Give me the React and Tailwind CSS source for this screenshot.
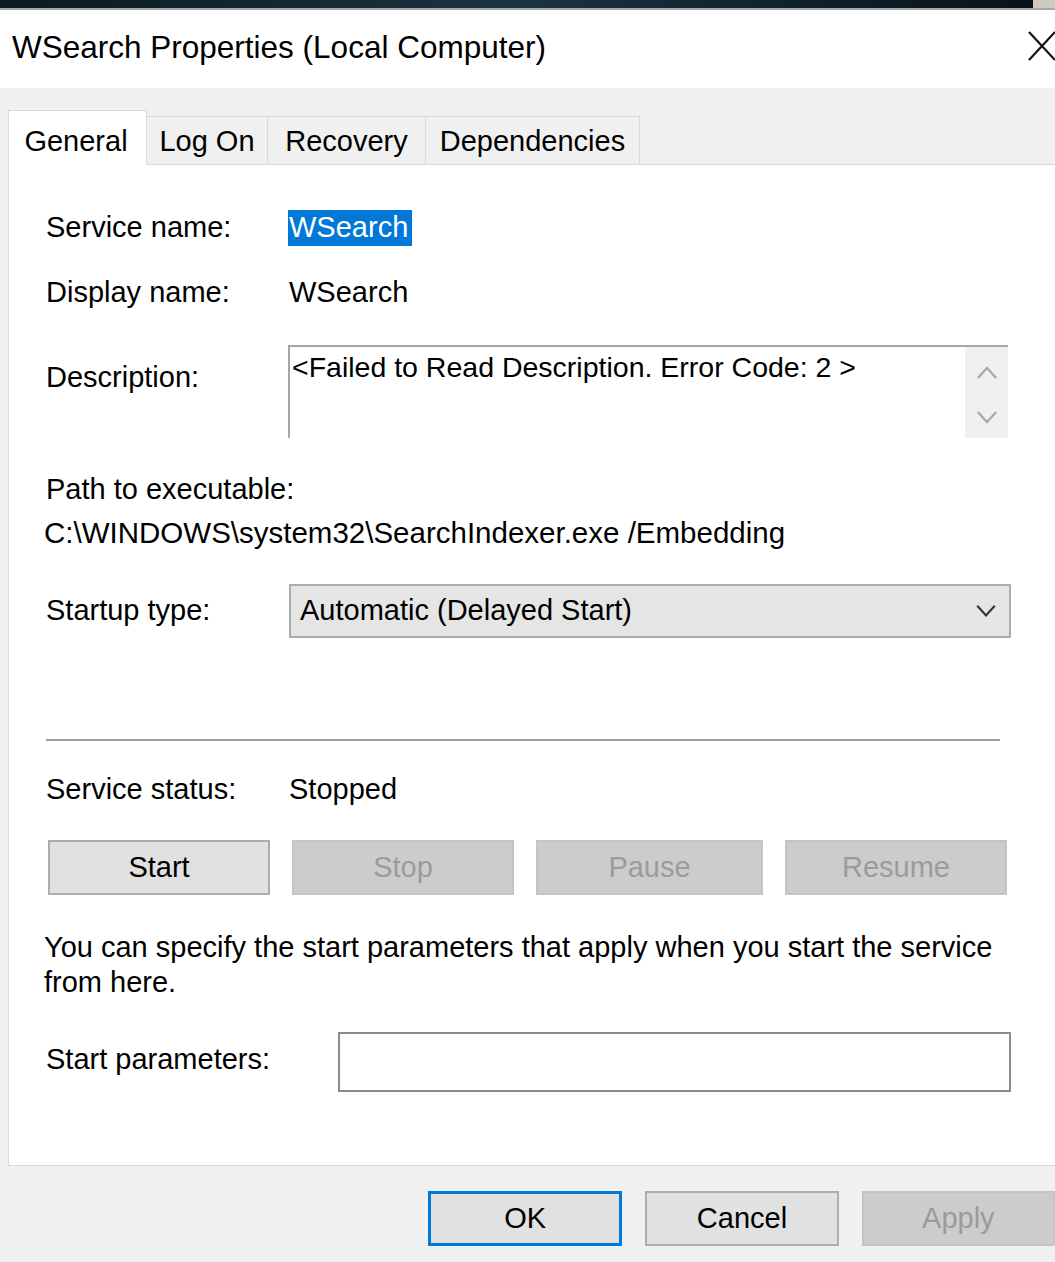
import React from "react";

const tabs = [
  { name: "General", w: "w-[139px]", active: true },
  { name: "Log On", w: "w-[121px]" },
  { name: "Recovery", w: "w-[158px]" },
  { name: "Dependencies", w: "w-[214px]" },
];

const Chevron = ({ d, className }) => (
  <svg className={className} viewBox="0 0 24 16" fill="none" stroke="currentColor" strokeWidth="2.4">
    <path d={d} />
  </svg>
);

const WinButton = ({ children, disabled, focused, className = "" }) => (
  <div
    className={
      "flex items-center justify-center " +
      (disabled
        ? "bg-[#cccccc] border-2 border-[#c4c4c4] text-[#9b9b9b] "
        : focused
        ? "bg-[#e1e1e1] border-[3px] border-[#0078d7] text-black "
        : "bg-[#e1e1e1] border-2 border-[#adadad] text-black ") +
      className
    }
  >
    {children}
  </div>
);

export default function App() {
  return (
    <div className="w-[1055px] h-[1262px] overflow-hidden bg-[#f0f0f0] font-['Liberation_Sans',Arial,sans-serif] text-[29px] text-black">
      {/* strip of the desktop behind the window */}
      <div className="h-[8px] flex">
        <div className="flex-1 bg-gradient-to-r from-[#0c1a22] via-[#1a3440] to-[#08121c]" />
        <div className="w-[22px] bg-[#cfcabf]" />
      </div>
      <div className="h-[2px] bg-[#a8a8a8]" />

      {/* title bar */}
      <div className="h-[78px] bg-white flex items-center justify-between pl-[12px]">
        <span className="text-[31.5px] -mt-[3px]">WSearch Properties (Local Computer)</span>
        <svg className="w-[28px] h-[30px] mr-[-1px] -mt-[6px]" viewBox="0 0 28 30" stroke="#111" strokeWidth="2.2">
          <path d="M1 1 L27 29 M27 1 L1 29" />
        </svg>
      </div>

      {/* tabs */}
      <div className="pt-[22px] pl-[8px] flex items-end relative z-10">
        {tabs.map((t) =>
          t.active ? (
            <div
              key={t.name}
              className={`${t.w} h-[55px] -mb-px bg-white border-t border-l border-r border-[#d9d9d9] flex items-start justify-center pt-[9px] pr-[3px]`}
            >
              {t.name}
            </div>
          ) : (
            <div
              key={t.name}
              className={`${t.w} h-[48px] bg-[#f0f0f0] border-t border-r border-[#d9d9d9] flex items-center justify-center pt-[2px]`}
            >
              {t.name}
            </div>
          )
        )}
      </div>

      {/* tab page */}
      <div className="ml-[8px] w-[1080px] h-[1002px] bg-white border border-[#d9d9d9] pl-[37px] flex flex-col">
        <div className="mt-[45px] h-[36px] flex items-center">
          <span className="w-[242px]">Service name:</span>
          <span className="bg-[#0078d7] text-white h-[36px] w-[124px] pl-[1px] flex items-center">WSearch</span>
        </div>

        <div className="mt-[29px] h-[36px] flex items-center">
          <span className="w-[243px]">Display name:</span>
          <span>WSearch</span>
        </div>

        <div className="mt-[34px] flex items-start">
          <span className="w-[242px] pt-[14px] leading-[36px]">Description:</span>
          <div className="w-[720px] h-[93px] border-t-2 border-l-2 border-[#a6a6a6] flex">
            <div className="flex-1 pl-[2px] pt-[2px] leading-[36px] text-[28.5px]">&lt;Failed to Read Description. Error Code: 2 &gt;</div>
            <div className="w-[43px] bg-[#f0f0f0] flex flex-col items-center pt-[18px] gap-[30px] text-[#a8a8a8]">
              <Chevron className="w-[22px] h-[15px]" d="M2 14 L12 3 L22 14" />
              <Chevron className="w-[22px] h-[15px]" d="M2 2 L12 13 L22 2" />
            </div>
          </div>
        </div>

        <div className="mt-[34px] h-[36px] flex items-center">Path to executable:</div>
        <div className="mt-[7px] h-[36px] flex items-center -ml-[2px] text-[29.5px]">C:\WINDOWS\system32\SearchIndexer.exe /Embedding</div>

        <div className="mt-[33px] flex items-center">
          <span className="w-[243px]">Startup type:</span>
          <div className="w-[722px] h-[54px] bg-[#e5e5e5] border-2 border-[#adadad] flex items-center justify-between pl-[9px] pr-[12px]">
            <span>Automatic (Delayed Start)</span>
            <Chevron className="w-[22px] h-[14px] text-[#333]" d="M2 2 L12 13 L22 2" />
          </div>
        </div>

        <div className="mt-[101px] w-[954px] h-[2px] bg-[#a0a0a0]" />

        <div className="mt-[31px] h-[36px] flex items-center">
          <span className="w-[243px]">Service status:</span>
          <span>Stopped</span>
        </div>

        <div className="mt-[32px] ml-[2px] flex gap-[22px]">
          <WinButton className="w-[222px] h-[55px]">Start</WinButton>
          <WinButton disabled className="w-[222px] h-[55px]">Stop</WinButton>
          <WinButton disabled className="w-[227px] h-[55px]">Pause</WinButton>
          <WinButton disabled className="w-[222px] h-[55px]">Resume</WinButton>
        </div>

        <p className="mt-[35px] w-[962px] leading-[35px] -ml-[2px]">
          You can specify the start parameters that apply when you start the service from here.
        </p>

        <div className="mt-[32px] flex items-center">
          <span className="w-[292px] -mt-[4px]">Start parameters:</span>
          <div className="w-[673px] h-[60px] bg-white border-2 border-[#8c8c8c]" />
        </div>
      </div>

      {/* dialog buttons */}
      <div className="mt-[25px] pl-[428px] flex gap-[23px]">
        <WinButton focused className="w-[197px] h-[55px]">OK</WinButton>
        <WinButton className="w-[196px] h-[55px]">Cancel</WinButton>
        <WinButton disabled className="w-[196px] h-[55px]">Apply</WinButton>
      </div>
    </div>
  );
}
